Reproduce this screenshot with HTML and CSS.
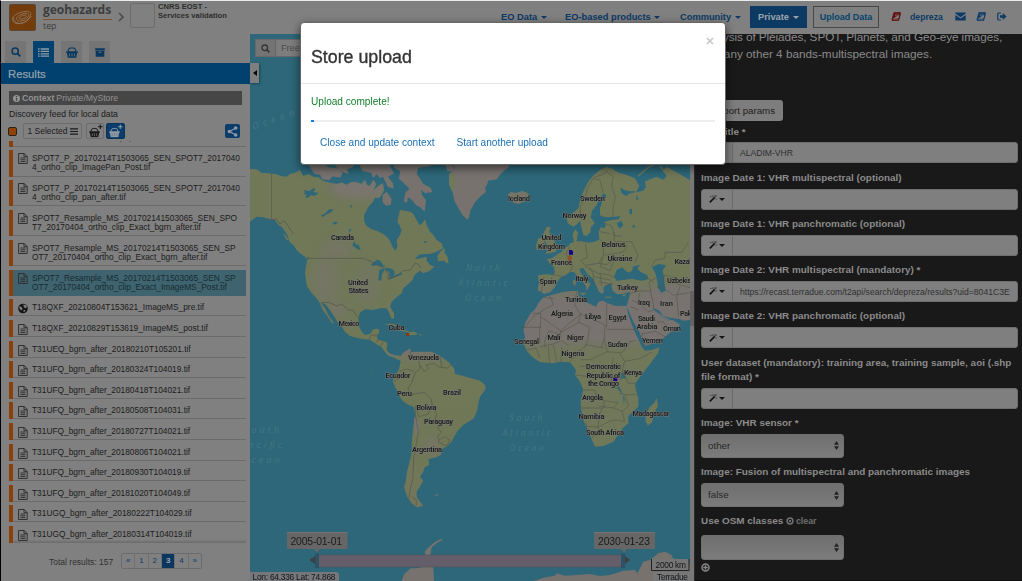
FILE: index.html
```html
<!DOCTYPE html>
<html lang="en">
<head>
<meta charset="utf-8">
<title>Geohazards TEP</title>
<link rel="stylesheet" href="styles.css">
</head>
<body>
<svg width="0" height="0" class="defs">
  <symbol id="file" viewBox="0 0 10 11"><path d="M.6.5h5.6l3 3v7H.6zM6 .5v3.2h3.2M2.4 5h5M2.4 6.8h5M2.4 8.6h5" fill="none" stroke="currentColor"/></symbol>
  <symbol id="globe" viewBox="0 0 10 10"><circle cx="5" cy="5" r="4.8" fill="#151515"/><path d="M5.3 1l3 .8.6 2-1.8 1-1.4-1.5zM1 3l2.2.2 1.3 2-1 1.6L2 6zM5.8 6.3l1.6.5-1 1.8-1.1-.6z" fill="#808080"/></symbol>
  <symbol id="basket" viewBox="0 0 12 11"><path d="M2 4.5Q2.600 1 4.500 1h3Q9.400 1 10 4.500" fill="none" stroke="currentColor" stroke-width="1.100"/><path d="M.2 4.200h11.600v1.500h-.7L10.200 10.700H1.800L.9 5.700H.2z" fill="currentColor"/><path d="M3.600 6.400v3M6 6.400v3M8.400 6.400v3" stroke="#7b7b7b" stroke-width=".8"/></symbol>
  <symbol id="search" viewBox="0 0 10 10"><circle cx="4.2" cy="4.2" r="3.1" fill="none" stroke="currentColor" stroke-width="1.500"/><path d="M6.400 6.400l2.900 2.900" stroke="currentColor" stroke-width="1.900"/></symbol>
  <symbol id="book" viewBox="0 0 10 9"><path d="M3 .4h6.500L7.700 7H1.100zM1.100 7q-.6 1.600.6 1.600h5.900L9.500 2" fill="currentColor" stroke="currentColor" stroke-width=".7" stroke-linejoin="round"/><path d="M4 2.200h3.800M3.600 3.600h3.800M1.900 7.500h5.300" stroke="#808080" stroke-width=".5"/></symbol>
  <symbol id="wand" viewBox="0 0 10 10"><path d="M1 9.200l6.200-6.200" stroke="#121212" stroke-width="2"/><path d="M1.200 1.800h2M4.400.6v1.700M5.400 1.300h4M8.500.5v2.300M9 4.400v1.800" stroke="#2a2a2a" stroke-width=".8"/></symbol>
</svg>
<div class="app">
  <header class="topbar">
    <div class="logo"><svg viewBox="0 0 27 27"><g fill="none" stroke="#8b7760" stroke-width="1"><path d="M4 15c-2-3 6-8 13-8 7-1 7 5 1 10-6 5-13 3-14-2z"/><path d="M7 15c0-3 6-6 10-6 5 0 4 4-1 7-4 2-8 2-9-1z"/><path d="M10 14c1-2 4-3 6-3 3 0 1 3-2 4-2 1-4 0-4-1zM3 13c-1 4 1 8 8 7 6-1 9-4 12-8"/></g></svg></div>
    <div class="brand"><div class="brand-name">geohazards</div><div class="brand-sub">tep</div></div>
    <svg class="crumb" viewBox="0 0 6 10"><path d="M1 1l4 4-4 4" fill="none" stroke="#4d4d4d" stroke-width="1.700"/></svg>
    <div class="thumb"></div>
    <div class="community">CNRS EOST -<br>Services validation</div>
    <nav class="nav">
      <a class="n1">EO Data <i class="caret"></i></a>
      <a class="n2">EO-based products <i class="caret"></i></a>
      <a class="n3">Community <i class="caret"></i></a>
      <a class="private">Private <i class="caret"></i></a>
      <a class="upload">Upload Data</a>
      <svg class="ico red"><use href="#book"/></svg>
      <a class="user">depreza</a>
      <svg class="ico env" viewBox="0 0 11 9"><path d="M.3.5h10.400v1L5.500 5.300.3 1.500zM.3 3l5.200 3.600L10.700 3v5.500H.3z" fill="currentColor"/></svg>
      <svg class="ico bk"><use href="#book"/></svg>
      <svg class="ico out" viewBox="0 0 10 9"><path d="M4 1H1.800Q.8 1 .8 2v5q0 1 1 1H4" fill="none" stroke="currentColor" stroke-width="1.200"/><path d="M3 3.300h2.800V1l3.800 3.500L5.800 8V5.800H3z" fill="currentColor"/></svg>
    </nav>
  </header>
  <main class="body">
    <aside class="side">
      <div class="tabs">
        <span class="tab"><svg width="10" height="10"><use href="#search"/></svg></span>
        <span class="tab on"><svg width="11" height="9" viewBox="0 0 11 9"><path d="M0 1h1.600M2.600 1H11M0 3.400h1.600M2.600 3.400H11M0 5.800h1.600M2.600 5.800H11M0 8.200h1.600M2.600 8.200H11" stroke="#909ba2" stroke-width="1.300"/></svg></span>
        <span class="tab"><svg width="12" height="11"><use href="#basket"/></svg></span>
        <span class="tab"><svg width="10" height="9" viewBox="0 0 10 9"><path d="M.2.3h9.600v2.200H.2zM.7 3h8.600v5.800H.7z" fill="currentColor"/><path d="M3.700 4.200h2.600" stroke="#777"/></svg></span>
      </div>
      <div class="results-title">Results</div>
      <div class="context"><svg width="7" height="7" viewBox="0 0 8 8"><circle cx="4" cy="4" r="4" fill="#939393"/><path d="M4 1.200v1.400M4 3.400v3.300" stroke="#444" stroke-width="1.400"/></svg><b>Context</b> Private/MyStore</div>
      <div class="feed">Discovery feed for local data</div>
      <div class="tools">
        <i class="swatch"></i>
        <span class="btn sel">1 Selected <svg width="8" height="7" viewBox="0 0 8 7"><path d="M0 .9h8M0 3.500h8M0 6.100h8" stroke="#181818" stroke-width="1.100"/></svg></span>
        <span class="btn bask"><svg width="15" height="14" viewBox="0 0 15 14"><use href="#basket" x="1" y="3.500" width="11" height="10"/><path d="M10 2.700h4.600M12.300.4V5" stroke="#151515" stroke-width="1.100"/></svg></span>
        <span class="btn bask blue"><svg width="15" height="14" viewBox="0 0 15 14"><use href="#basket" x="1" y="3.500" width="11" height="10"/><path d="M10 2.700h4.600M12.300.4V5" stroke="#8d99a5" stroke-width="1.100"/></svg></span>
        <span class="share"><svg width="11" height="11" viewBox="0 0 11 11"><path d="M8.800 2L2.500 5.400 8.800 9" fill="none" stroke="#8d99a5" stroke-width="1.200"/><g fill="#8d99a5"><circle cx="8.700" cy="2" r="1.800"/><circle cx="2.400" cy="5.500" r="1.800"/><circle cx="8.700" cy="9" r="1.800"/></g></svg></span>
      </div>
      <div class="list">
        <div class="row cut"><span>T7_20170404_ortho_clip_pan.tif</span></div>
        <div class="row two"><svg><use href="#file"/></svg><span>SPOT7_P_20170214T1503065_SEN_SPOT7_2017040<br>4_ortho_clip_ImagePan_Post.tif</span></div>
        <div class="row two"><svg><use href="#file"/></svg><span>SPOT7_P_20170214T1503065_SEN_SPOT7_2017040<br>4_ortho_clip_pan_after.tif</span></div>
        <div class="row two"><svg><use href="#file"/></svg><span>SPOT7_Resample_MS_201702141503065_SEN_SPO<br>T7_20170404_ortho_clip_Exact_bgrn_after.tif</span></div>
        <div class="row two"><svg><use href="#file"/></svg><span>SPOT7_Resample_MS_20170214T1503065_SEN_SP<br>OT7_20170404_ortho_clip_Exact_bgrn_after.tif</span></div>
        <div class="row two active"><svg><use href="#file"/></svg><span>SPOT7_Resample_MS_20170214T1503065_SEN_SP<br>OT7_20170404_ortho_clip_Exact_ImageMS_Post.tif</span></div>
        <div class="row"><svg><use href="#globe"/></svg><span>T18QXF_20210804T153621_ImageMS_pre.tif</span></div>
        <div class="row"><svg><use href="#file"/></svg><span>T18QXF_20210829T153619_ImageMS_post.tif</span></div>
        <div class="row"><svg><use href="#file"/></svg><span>T31UEQ_bgrn_after_20180210T105201.tif</span></div>
        <div class="row"><svg><use href="#file"/></svg><span>T31UFQ_bgrn_after_20180324T104019.tif</span></div>
        <div class="row"><svg><use href="#file"/></svg><span>T31UFQ_bgrn_after_20180418T104021.tif</span></div>
        <div class="row"><svg><use href="#file"/></svg><span>T31UFQ_bgrn_after_20180508T104031.tif</span></div>
        <div class="row"><svg><use href="#file"/></svg><span>T31UFQ_bgrn_after_20180727T104021.tif</span></div>
        <div class="row"><svg><use href="#file"/></svg><span>T31UFQ_bgrn_after_20180806T104021.tif</span></div>
        <div class="row"><svg><use href="#file"/></svg><span>T31UFQ_bgrn_after_20180930T104019.tif</span></div>
        <div class="row"><svg><use href="#file"/></svg><span>T31UFQ_bgrn_after_20181020T104049.tif</span></div>
        <div class="row"><svg><use href="#file"/></svg><span>T31UGQ_bgrn_after_20180222T104029.tif</span></div>
        <div class="row last"><svg><use href="#file"/></svg><span>T31UGQ_bgrn_after_20180314T104019.tif</span></div>
      </div>
      <div class="pager"><span class="total">Total results: 157</span><span class="pages"><a>«</a><a>1</a><a>2</a><a class="cur">3</a><a>4</a><a>»</a></span></div>
    </aside>
    <section class="map">
      <svg class="world" viewBox="250 34 440 547">
        <defs>
          <linearGradient id="hot" x1="0" y1="0" x2="0" y2="1"><stop offset="0" stop-color="#78726f"/><stop offset=".1" stop-color="#707858"/><stop offset=".7" stop-color="#707757"/><stop offset="1" stop-color="#74765b"/></linearGradient>
          <linearGradient id="afr" gradientUnits="userSpaceOnUse" x1="0" y1="20" x2="0" y2="860"><stop offset="0" stop-color="#707858"/><stop offset=".4" stop-color="#707858"/><stop offset=".48" stop-color="#787370"/><stop offset=".61" stop-color="#787370"/><stop offset=".66" stop-color="#707859"/><stop offset="1" stop-color="#707859"/></linearGradient>
          <filter id="soft"><feGaussianBlur stdDeviation="14"/></filter>
        </defs>
        <rect x="250" y="34" width="440" height="547" fill="#2d6779"/>
        <g transform="translate(250 160) scale(.33333)" stroke-linejoin="round">
          <clipPath id="na"><path id="nap" d="M0 27L20 28 35 38 55 40 75 42 95 48 110 50 120 42 135 38 150 30 160 48 175 42 190 50 205 52 220 62 240 68 260 72 275 68 290 75 300 68 315 66 335 72 345 60 350 75 360 78 370 60 378 72 370 92 385 78 398 70 402 90 395 105 385 115 375 112 372 125 360 135 350 150 342 165 343 185 350 198 365 208 380 212 400 222 412 232 420 242 428 262 437 272 442 260 440 240 450 225 455 210 448 195 442 185 445 170 450 150 465 152 480 155 490 162 500 180 508 195 515 192 525 178 530 195 540 215 550 225 560 240 575 250 580 265 560 275 540 282 520 282 505 285 495 298 510 295 530 290 530 302 540 315 553 320 540 332 520 340 510 332 500 340 492 348 488 360 475 372 460 385 455 400 440 412 425 425 420 440 432 460 432 475 425 477 417 458 410 445 390 445 370 450 345 448 330 458 325 475 328 500 335 515 345 525 360 522 370 508 385 506 388 515 380 530 385 540 400 543 412 548 410 570 420 582 435 590 445 585 452 592 445 600 430 592 415 588 402 572 395 562 375 550 360 540 345 538 325 535 300 528 285 515 275 500 262 485 250 465 240 450 225 432 213 428 225 445 235 465 252 490 245 488 230 465 218 450 210 430 200 415 185 400 172 380 168 365 165 340 168 318 172 300 165 290 150 280 140 270 130 255 118 245 112 225 95 200 85 195 75 180 60 178 40 172 20 170 0 185Z"/></clipPath>
          <use href="#nap" fill="#707858"/>
          <g clip-path="url(#na)"><g filter="url(#soft)" fill="#7a7470"><ellipse cx="330" cy="80" rx="90" ry="35"/><ellipse cx="260" cy="265" rx="45" ry="22" opacity=".6"/><ellipse cx="225" cy="360" rx="38" ry="70" opacity=".5"/><ellipse cx="350" cy="375" rx="40" ry="60" opacity=".3"/><ellipse cx="260" cy="450" rx="30" ry="20" opacity=".7"/></g></g>
          <g fill="#78726f"><path d="M175 15l15-8 25 0 20 15 25 3 18 14-8 14-22-4-10 12-22-4-5-12-18-4zM243 0h60l8 20-20 8 5 14-28-10zM320 0h90l22 40-18 10 15 20 2 16-18-6-14-30-10 4-8-12-12 12-6-16-25-4zM440 0h70l25 0 8 18-38 5-5 18 20 30 22 12 5 14-22 2-12-10 3 16 12 16-4 34-14-14-12-5-12-16-12-8-3 16-10-4 5-26 12-12-20-20-12-10 5-22-20-12zM398 105l12-10 15 22-3 18-14 2-10-10zM585 8l30 12-5 14-18 0zM690 0H610l2 30-15 12 0 30 10 22 6 28 14 26 10 16 15 16 5-8 5-22 12-22 16-18 18-14z"/></g>
          <path d="M600 42l12-5 6 30-6 20-8 5-6-20z" fill="#707858"/>
          <g fill="#707858"><path d="M562 288l10-14 12-10 0 16 8 8 4 22-8-2-6-6-18 2zM440 510l8-3 14 4 16 2-4 4-20-4zM475 517l18-2 12 6-12 4-16 0zM400 492l30-1 15 8-20-3zM507 523h8v3h-8zM100 222l6 2 10 16-6 0z"/></g>
          <g fill="#2d6779"><path d="M160 90l18 4 12-10 6 4-6 8 16 3-12 8-12-1-10 8-6-2 4-8-10-3 6-4zM213 165l12-4 10-12 15-2-6 10-14 6-12 8zM247 188l10-3 8 3-14 6zM300 135l6 2-3 9zM296 212l6-8 1 8-5 4zM308 252l6-8 4 10 8 0 6 16-10-2-8-8-6-2zM522 244l8 0 0 5-7-1zM363 313l18-14 10 4 10 14 8 1-12 4-16-6-14 2zM385 360l3-30 12-6 2 8-6 10-2 20zM402 325l14-2 16 8 2 12-12 10-4-6 0-12-8-2zM415 354l20-8 20-8 2 5-22 9-18 6zM170 290l8 5-6 4zM362 135l14-20 8 2-6 20z"/></g>
          <g fill="none" stroke="#55544f" stroke-width="2"><path d="M64 40V178L80 178 90 192 103 182 112 195 130 222M172 295H342L362 304 395 322 415 340 415 358 435 350 460 332 480 331 495 310 505 312 512 324M213 428L235 427 262 438 275 432 295 450 308 450 326 475M357 540L362 526 382 525M378 548L388 535M400 545L390 560"/></g>
          <path d="M450 590L460 578 480 565 484 576 500 575 545 575 570 588 595 605 612 625 615 642 640 648 690 662 705 675 707 687 698 700 690 710 685 730 682 750 672 775 640 795 625 810 615 825 605 845 590 860 578 865 572 885 558 892 535 898 538 915 524 922 520 935 510 950 520 962 510 980 500 995 500 1010 508 1022 520 1038 500 1042 485 1030 472 1012 462 982 468 960 470 940 476 915 484 885 486 840 490 800 496 765 492 742 470 732 455 720 445 700 435 680 428 664 432 650 446 630 452 605 445 595 437 590 420 588 412 578Z" fill="url(#hot)"/>
          <g fill="#7a7471"><path d="M492 775l8 0 10 15-8 35-6 5z"/><ellipse cx="545" cy="860" rx="24" ry="28" opacity=".6" filter="url(#soft)"/></g>
          <g fill="none" stroke="#55564b" stroke-width="2"><path d="M480 575l4 16 22 8 4 28-14 10-10 30-12 20 12 16 14-2 22-4 20 18 6 22 12 24-4 16 12 8-4 22 12 10-12 10 0 10M492 635l-8-4-16-4-20 8M432 664l20-12 12-14M510 615l12 20 14-10-8-10 24-5 16 12 24 2 14-12M570 590l5 30M555 740l-14 4-6 18-28 8-6-20-4-14M500 735l-5 20 10 60-10 60-4 20-2 60-8 30-4 32M565 840l20-10 15 12-10 16-22-10zM540 772l-6 14M485 1010l14 10v16"/></g>
          <path d="M455 1263L462 1243 482 1225 500 1225 515 1222 528 1188 524 1175 540 1158 552 1148 570 1138 580 1138 560 1150 545 1162 540 1190 550 1225 552 1263ZM850 1263L880 1253 915 1247 920 1240 945 1247 970 1246 1020 1242 1050 1248 1080 1245 1120 1232 1155 1230 1162 1240 1180 1205 1200 1200 1225 1180 1245 1175 1265 1185 1268 1195 1320 1210V1263ZM553 1005l14-3-8 6zM364 638h4v2h-4z" fill="#78726f"/>
        </g>
        <g transform="translate(470 160) scale(.33333)">
          <path d="M0 0H110L118 20 95 38 80 58 55 62 50 78 25 92 12 110 0 122Z" fill="#78726f"/>
          <path d="M113 105l10-10 14 4 20-6 15 5 6 16-14 10-18 8-16-4-4-10z" fill="#757466"/>
          <path d="M293 190L290 175 308 160 325 145 332 115 342 90 355 65 372 45 390 30 410 20 430 28 445 38 470 45 495 55 508 78 500 94 478 94 462 90 450 82 455 100 468 108 480 100 520 92 528 80 524 65 540 58 560 50 580 60 590 48 578 32 590 20 660 60V480L640 482 630 478 600 473 580 467 568 452 552 444 545 440 558 458 575 475 592 482 608 480 632 494 620 502 600 515 580 535 550 550 526 558 520 545 508 515 490 485 475 450 470 440 474 460 484 490 494 515 504 535 515 560 525 572 545 570 568 562 565 578 540 612 510 650 495 672 498 690 505 715 505 740 475 768 475 790 458 805 448 820 430 845 400 858 375 860 368 845 352 808 342 785 333 745 332 720 340 690 330 665 315 645 318 630 300 607 270 605 250 610 210 606 188 592 172 575 160 550 165 530 160 510 165 490 182 460 195 448 205 430 220 412 245 405 270 398 300 393 324 393 325 405 340 422 355 430 378 440 385 425 400 422 412 430 435 437 470 438 478 410 480 395 460 402 440 402 428 392 424 378 428 368 412 375 400 382 402 395 395 402 386 393 378 375 370 358 352 342 340 324 328 326 334 342 346 356 362 372 356 382 350 392 348 378 338 364 325 350 312 336 300 336 282 348 272 352 260 368 255 382 240 397 222 402 212 395 203 390 207 368 204 346 225 343 250 345 255 335 250 318 238 308 230 298 245 295 260 284 275 275 282 264 296 258 300 250 312 246 308 222 316 208 324 218 320 244 335 244 352 248 375 245 388 238 386 215 392 202 402 205 408 196 402 186 425 180 445 178 452 168 435 170 405 172 390 166 390 145 396 125 410 108 402 100 390 112 380 135 366 152 362 172 374 190 362 202 362 215 350 228 340 225 334 202 330 182 322 192 310 200Z" fill="url(#afr)"/>
          <path d="M230 200l12 2-4 14 8 16 10 16 8 12-8 16-30 6 6-10-8-6 6-14-6-8-6-18zM205 235l15-2 4 18-6 16-18 4-2-14zM310 374l-2-14 10 2-2 16zM325 398l24 0-8 8zM404 410h20v3h-20zM455 407l14-6-6 9zM560 715l4 22-10 20-8 30-12 10-8-15 3-22 10-18 14-14z" fill="#707858"/>
          <path d="M560 455l-15-5-60-15-6 20 12 30 18 32 18 38 20-8 40-18 40-32-20-14zM520 400l60-25 80 0v105l-60-10-30-20-40-10z" fill="#787370" opacity=".8"/>
          <g fill="#2d6779"><path d="M432 350l8-20 16-8 12 12 10 4 10-8 0-10 22-6-8 12 10 10 20 10 2 12-20 4-30-6-24 4-20 2zM546 322l20-10 22 4-10 16 4 20 2 22 4 18-14 6-10-14-2-20-6-24zM440 190l14-8 6 14-12 10zM478 148l8-2 0 18-8-4zM488 195h6v8h-6zM498 105l8 12-6 4zM452 640l14 0 2 14-14 2zM440 678l8 2 16 36-2 18-4-30-14-16z"/></g>
          <path d="M505 48l30-26 20-10 25-10M495 95l4-2M580 30l-10-12" stroke="#707858" stroke-width="4" fill="none"/>
          <g fill="none" stroke="#55564c" stroke-width="1.800"><path d="M334 180L330 140 345 115 352 85 370 55 390 60 400 100M372 52L395 45 410 35 430 50 425 80 436 110 430 140 428 170M405 190l20 8 10 30 20 0M390 215l30 6M346 250l6 42-20 10 14 14 40-6 24 4 18-16 30 0M388 238l12 10 0 38-14 24M400 286l60-10 12-20M430 215l4 30 50 0 20 40-10 24M300 260l-12 22 12 16 8 20-8 20M282 350l-34-6M222 350l-8 46M345 320l40 20 30 4 16 8M360 322l10 20 0 30M372 350l50 10M385 365l40 8M390 340l5 38M400 290l-10 30 30 12 10-26-14-16M425 370l-20 8M520 350l20 8 12 10M480 400l30-8 32 2-4-30 20-10M510 395l-6 30 30 30 16-4M485 420l30 15M482 440l24 10M542 394l10 52M590 390l20 16 48-8M560 380l22 6M575 395l8-50 30 8 10 20 40 10M545 320l10-20 30-5 0-18 50 0 20-30M630 380l-10 30 6 60M550 550l-30 2-4-30 40-8 34 18M595 505l-16-20-18 0M240 408l10 26-30 16-30 20-28 34M220 412l30 4M186 460h26v42h-54M212 470l60 42 60-50 76 34M320 395l-6 40 18 28-6 24-60 34-30-8-12 30 0 20M272 512l0 22-32 6M326 487l32 14-4 36-10 28M410 430v70l-6 0v32l-10 30M410 508h96M165 550l44-2 0-50M172 570l26-6 12 30M210 560l40-8 10 52M250 552l24-10 22 14M235 560l4 48M275 560l-2 44M300 604l20-20 28-30M348 554l54 10M330 620l56-6 10 22M402 535l10 40-50 24-30 0M412 575l44 4 24-34 16-4M450 580l14 24 44-8 40-20M464 604l-8 30 20 36 20 0M430 595l-6 35 0 40M340 690h34l10 30 18 2v22l-70 0M402 722l42 6-14 16-42-6M395 745l-10 40 0 28-20 22M430 744l26 10 8 30-26-4-20 4-30 16M456 754l20-16-12-34-18-4M425 680l24 8M464 704l36 0M350 790l0 10 36 0M460 630l-10 30M318 645l32 4 12-32"/></g>
          <path d="M292 290l8-4 6 6-2 10h-10z" fill="#8b5222"/><path d="M297 270h8l4 4v10h-12zM432 651h10v12h-12v-8z" fill="#170089"/>
        </g>
        <rect x="406" y="333" width="3" height="3" fill="#8b3508"/>
        <g class="places">
          <text x="331" y="239.500" textLength="23">Canada</text><text x="348" y="284.500" textLength="20">United</text><text x="348.500" y="293" textLength="20">States</text><text x="338.500" y="325.500" textLength="21">Mexico</text><text x="388.500" y="330" textLength="16">Cuba</text><text x="408" y="360" textLength="31">Venezuela</text><text x="385.500" y="377.500" textLength="25">Ecuador</text><text x="397" y="396" textLength="15">Peru</text><text x="443" y="395" textLength="18">Brazil</text><text x="416.500" y="410" textLength="20">Bolivia</text><text x="424" y="424" textLength="29">Paraguay</text><text x="412" y="452" textLength="30">Argentina</text>
          <text x="508" y="201" textLength="22">Iceland</text><text x="580" y="201" textLength="25">Sweden</text><text x="562.500" y="218" textLength="24">Norway</text><text x="541.500" y="240" textLength="20">United</text><text x="538" y="248.500" textLength="27">Kingdom</text><text x="601.500" y="246.500" textLength="24">Belarus</text><text x="607.500" y="260.500" textLength="25">Ukraine</text><text x="551" y="265" textLength="21">France</text><text x="539.500" y="283.500" textLength="17">Spain</text><text x="575.500" y="280.500" textLength="13">Italy</text><text x="617" y="289.500" textLength="21">Turkey</text><text x="674.500" y="264" textLength="35">Kazakhstan</text><text x="667" y="282.500" textLength="34">Uzbekistan</text><text x="565" y="302" textLength="22">Tunisia</text><text x="551" y="316" textLength="22">Algeria</text><text x="585" y="318.500" textLength="16">Libya</text><text x="608.500" y="319.500" textLength="18">Egypt</text><text x="638" y="304.500" textLength="12">Iraq</text><text x="660" y="305.500" textLength="13">Iran</text><text x="680" y="316" textLength="26">Pakistan</text><text x="638" y="320.500" textLength="17">Saudi</text><text x="636.500" y="329" textLength="21">Arabia</text><text x="663" y="331" textLength="18">Oman</text><text x="642" y="342.500" textLength="21">Yemen</text><text x="514" y="344" textLength="25">Senegal</text><text x="547.500" y="339.500" textLength="13">Mali</text><text x="567" y="339.500" textLength="17">Niger</text><text x="607.500" y="347" textLength="20">Sudan</text><text x="561.500" y="356" textLength="23">Nigeria</text><text x="586" y="369" textLength="35">Democratic</text><text x="586.500" y="377.500" textLength="34">Republic of</text><text x="588" y="386" textLength="31">the Congo</text><text x="624" y="374.500" textLength="18">Kenya</text><text x="582" y="400" textLength="21">Angola</text><text x="578.500" y="419" textLength="26">Namibia</text><text x="586" y="435" textLength="38">South Africa</text><text x="632.500" y="415.500" textLength="37">Madagascar</text>
        </g>
        <g class="seas"><text x="466" y="270.500" textLength="34">North</text><text x="458.500" y="285.500" textLength="49">Atlantic</text><text x="465" y="300.500" textLength="36">Ocean</text><text x="509.500" y="421" textLength="33">South</text><text x="502.500" y="436" textLength="48">Atlantic</text><text x="509" y="451" textLength="35">Ocean</text><text x="244" y="433" textLength="35">South</text><text x="240" y="448" textLength="42">Pacific</text><text x="242" y="463" textLength="38">Ocean</text><text x="223" y="131" textLength="74" transform="rotate(-19 249 130)">tic Ocean</text></g>
        <g class="slider"><rect x="317" y="555" width="307" height="12" fill="#635e69" stroke="#51525d" stroke-width=".6"/><path d="M315 553.500h4V568h-4zM621 553.500h4V568h-4z" fill="#2c5263"/><path d="M315 556v8l-5.500-4zM625 556v8l5-4z" fill="#3e4142"/><path d="M287 532h60.500v17H320l-3 3.500-3-3.500h-27zM594 532h61v17h-28l-3 3.500-3-3.500h-27z" fill="#666"/><path d="M287 532.500h60.500M594 532.500h61" stroke="#737373"/><text x="290.500" y="544.500" textLength="51.500">2005-01-01</text><text x="598" y="544.500" textLength="52">2030-01-23</text></g>
        <g class="notes"><path d="M250 572h86q3 0 3 3v6h-89z" fill="#75777a"/><path d="M653 572h37v9h-37z" fill="#77787a"/><path d="M651.500 559v11.500h37.500V559" fill="#757575" stroke="#222"/><text x="252.500" y="580.300" textLength="83">Lon: 64.336 Lat: 74.868</text><text x="655.500" y="568" textLength="30.500">2000 km</text><text x="657" y="580.300" textLength="31">Terradue</text></g>
      </svg>
      <div class="map-search"><span><svg width="9" height="9"><use href="#search"/></svg></span>Free</div>
      <div class="toggle"></div>
    </section>
    <div class="gutter"><i></i></div>
    <section class="panel">
      <p class="desc"><span>analysis of Pléiades, SPOT, Planets, and Geo-eye images,</span><br>and any other 4 bands-multispectral images.</p>
      <span class="import">Import params</span>
      <label>Job title *</label>
      <div class="field"><span></span><div>ALADIM-VHR</div></div>
      <label>Image Date 1: VHR multispectral (optional)</label>
      <div class="field"><span><svg><use href="#wand"/></svg><i class="caret"></i></span><div></div></div>
      <label>Image Date 1: VHR panchromatic (optional)</label>
      <div class="field"><span><svg><use href="#wand"/></svg><i class="caret"></i></span><div></div></div>
      <label>Image Date 2: VHR multispectral (mandatory) *</label>
      <div class="field"><span><svg><use href="#wand"/></svg><i class="caret"></i></span><div><em>https://recast.terradue.com/t2api/search/depreza/results?uid=8041C3E</em></div></div>
      <label>Image Date 2: VHR panchromatic (optional)</label>
      <div class="field"><span><svg><use href="#wand"/></svg><i class="caret"></i></span><div></div></div>
      <label class="tall">User dataset (mandatory): training area, training sample, aoi (.shp<br>file format) *</label>
      <div class="field"><span><svg><use href="#wand"/></svg><i class="caret"></i></span><div></div></div>
      <label>Image: VHR sensor *</label>
      <div class="select">other<svg viewBox="0 0 5 9"><path d="M0 3.700L2.500 0 5 3.700zM0 5.300h5L2.500 9z"/></svg></div>
      <label class="s">Image: Fusion of multispectral and panchromatic images</label>
      <div class="select">false<svg viewBox="0 0 5 9"><path d="M0 3.700L2.500 0 5 3.700zM0 5.300h5L2.500 9z"/></svg></div>
      <label class="s osm">Use OSM classes <svg width="8" height="8" viewBox="0 0 8 8"><circle cx="4" cy="4" r="2.900" fill="none" stroke="#707070" stroke-width="1.500"/><path d="M2.800 2.800l2.400 2.400M5.200 2.800L2.800 5.200" stroke="#707070"/></svg><small>clear</small></label>
      <div class="select"><svg viewBox="0 0 5 9"><path d="M0 3.700L2.500 0 5 3.700zM0 5.300h5L2.500 9z"/></svg></div>
      <svg class="add" width="9" height="9" viewBox="0 0 9 9"><circle cx="4.500" cy="4.500" r="3.500" fill="none" stroke="#888" stroke-width="1.500"/><path d="M2.300 4.500h4.400M4.500 2.300v4.400" stroke="#888" stroke-width="1.300"/></svg>
    </section>
  </main>
</div>
<div class="modal">
  <div class="modal-head"><h1>Store upload</h1><svg class="close" width="8" height="8" viewBox="0 0 8 8"><path d="M1 1l6 6M7 1L1 7" stroke="#c8c8c8" stroke-width="1.700"/></svg></div>
  <div class="modal-body">
    <div class="ok">Upload complete!</div>
    <div class="progress"><i></i></div>
    <div class="actions"><a>Close and update context</a><a>Start another upload</a></div>
  </div>
</div>
</body>
</html>
```

FILE: styles.css
```css
* { box-sizing: border-box; }
body { margin: 0; width: 1022px; height: 581px; overflow: hidden; background: #000; font: 10.1px/14px "Liberation Sans", Arial, sans-serif; color: #1a1a1a; position: relative; }
.defs { position: absolute; }
.app { width: 1022px; height: 581px; display: flex; flex-direction: column; border-top: 1px solid #e9ecec; border-left: 1px solid #000; background: #808080; }
.topbar { height: 33px; flex: none; display: flex; background: #808080; }
.logo { width: 27px; height: 27px; margin: 3px 0 0 8px; background: #743c0b; border: 1px solid #5a4635; border-radius: 2px; }
.logo svg { display: block; width: 25px; height: 25px; }
.brand { width: 69px; margin-left: 7px; font-family: "Open Sans", sans-serif; color: #3d3d3d; }
.brand-name { font-size: 12.1px; font-weight: 700; letter-spacing: -.1px; line-height: 18px; height: 18.5px; border-bottom: 1px solid #81522c; }
.brand-sub { font-size: 8.8px; line-height: 10px; padding-top: 1px; }
.crumb { width: 6px; height: 10px; margin: 11px 0 0 6px; }
.thumb { width: 25px; height: 25px; margin: 2px 0 0 6px; border: 1px solid #6c6c6c; border-radius: 2px; }
.community { margin: 2px 0 0 3px; width: 100px; font-weight: bold; font-size: 7.6px; line-height: 8.6px; color: #2d2d2d; white-space: nowrap; }
.nav { margin-left: auto; display: flex; align-items: center; width: 521px; height: 31px; font-weight: bold; font-size: 9.3px; color: #0c3a66; }
.nav a { flex: none; white-space: nowrap; }
.caret { display: inline-block; border: 3px solid transparent; border-top-color: currentColor; border-bottom: 0; vertical-align: 1px; margin-left: 1px; }
.n1 { width: 64px; }
.n2 { width: 115px; }
.n3 { width: 70px; }
.nav .private { width: 57px; height: 22px; line-height: 22px; padding-left: 8px; background: #0c3a62; color: #9ba4ac; }
.nav .upload { width: 66px; height: 22px; line-height: 20px; margin: 0 12px 0 6px; text-align: center; border: 1px solid #474747; color: #04446f; font-size: 9px; }
.ico { flex: none; width: 10px; height: 9px; }
.red { color: #620a0c; }
.user { width: 45px; margin-left: 9px; font-size: 8.7px; }
.env { width: 11px; }
.bk { margin-left: 10px; }
.out { margin-left: 11px; }
.body { flex: 1; display: flex; min-height: 0; }
.side { width: 249px; flex: none; background: #808080; display: flex; flex-direction: column; }
.tabs { display: flex; gap: 7px; padding: 7px 0 0 4px; }
.tab { width: 21px; height: 22px; background: #757575; display: flex; align-items: center; justify-content: center; color: #08375f; }
.tab.on { background: #004170; }
.results-title { height: 21px; background: #004170; color: #98a2a9; font-size: 11.3px; line-height: 23px; padding-left: 7px; -webkit-text-stroke: .2px; }
.context { margin: 7px 8px 0; height: 14px; background: #464646; color: #939393; font-size: 8.7px; line-height: 14px; padding-left: 4px; display: flex; align-items: center; gap: 2px; }
.feed { margin: 3px 0 0 8px; font-size: 8.65px; line-height: 12px; }
.tools { display: flex; height: 16px; margin-top: 3px; padding-left: 7px; align-items: center; flex: none; }
.swatch { width: 9px; height: 9px; background: #8b4308; border: 1px solid #302015; border-radius: 2px; }
.btn { height: 16px; border: 1px solid #6c6c6c; border-radius: 2px; display: flex; align-items: center; justify-content: center; flex: none; }
.sel { width: 59px; margin-left: 6px; font-size: 8.5px; gap: 2px; white-space: nowrap; }
.bask { width: 18px; margin-left: 4px; }
.blue { background: #0c3c69; border-color: #0a335a; color: #8d99a5; width: 19px; margin-left: 2px; }
.share { width: 15px; height: 14px; margin-left: 100px; border-radius: 2px; background: #0c3c69; display: flex; align-items: center; justify-content: center; }
.list { flex: none; height: 402px; margin: 2px 4px 0 8px; overflow: hidden; font-size: 8.35px; line-height: 9.3px; color: #1c1c1c; }
.row { height: 17px; margin-bottom: 3.6px; border-left: 4px solid #8a4009; display: flex; white-space: nowrap; padding-left: 5px; background: linear-gradient(#6b6b6b, #6b6b6b) right bottom / 100% 1px no-repeat; }
.row svg { width: 10px; height: 11px; margin: 4px 4px 0 0; color: #303030; flex: none; }
.row span { padding-top: 4px; }
.two { height: 26.5px; margin-bottom: 3.4px; }
.two svg { margin-top: 3px; }
.cut { height: 6px; margin-bottom: 3px; padding-left: 19px; }
.cut span { margin-top: -11px; height: 12px; overflow: hidden; color: #444; }
.row.active { background: #3f646f; color: #172b33; }
.row.last { background: linear-gradient(#0000, #0000 80%, #6b6b6b); margin: 0; }
.pager { display: flex; align-items: center; margin-top: 9.5px; height: 16px; font-size: 8.5px; color: #303030; }
.total { width: 72px; margin-left: 48px; padding-top: 2px; white-space: nowrap; }
.pages { display: flex; border: 1px solid #6b6b6b; border-radius: 2px; width: 81px; height: 16px; color: #0c3b67; font-size: 8px; }
.pages a { flex: 1; text-align: center; line-height: 14px; border-left: 1px solid #707070; }
.pages a:first-child { border-left: 0; }
.pages .cur { background: #0a365f; color: #9ca5ae; font-weight: bold; }
.map { width: 440px; flex: none; position: relative; }
.world { display: block; width: 440px; height: 547px; overflow: hidden; }
.places { font: 600 7.5px Roboto, sans-serif; fill: #1c1c1c; stroke: #7b7b78; stroke-width: .8px; paint-order: stroke; }
.places text, .seas text, .slider text, .notes text { white-space: pre; }
.seas { font: italic 8.8px "Open Sans", sans-serif; fill: #477588; }
.slider text { font: 10.4px "Liberation Sans", sans-serif; fill: #1b1b1b; }
.notes text { font: 8.4px "Liberation Sans", sans-serif; fill: #151515; }
.map-search { position: absolute; left: 5px; top: 5px; width: 150px; height: 18px; background: #7d7d7d; border: 1px solid #696969; font-size: 9.1px; line-height: 17px; color: #4c4c4c; display: flex; gap: 5px; }
.map-search span { width: 20px; background: #747474; border-right: 1px solid #666; color: #353535; display: flex; align-items: center; justify-content: center; }
.toggle { position: absolute; left: 0; top: 29px; width: 9px; height: 20px; background: #7e7e7e; box-shadow: 1px 1px 2px #174654; }
.toggle::after { content: ""; position: absolute; left: 3px; top: 7px; border: 3px solid transparent; border-right: 4px solid #080808; border-left: 0; }
.gutter { width: 5px; background: #787878; border-right: 1px solid #2a2a2a; padding-top: 257px; flex: none; }
.gutter i { display: block; height: 35px; background: #636363; }
.panel { flex: 1; background: #191919; overflow: hidden; padding-left: 6px; display: flex; flex-direction: column; align-items: flex-start; color: #8b8b8b; border-bottom: 1px solid #0c0c0c; }
.desc { margin: -5px 0 0; font-size: 11.75px; line-height: 16.6px; white-space: nowrap; flex: none; }
.desc span { letter-spacing: -.08px; }
.import { margin-top: 38.2px; width: 82px; height: 21px; flex: none; border-radius: 3px; background: #7d7d7d; color: #202020; text-align: right; padding-right: 8px; line-height: 21px; font-size: 9.7px; }
.panel label { font-weight: bold; font-size: 9.93px; line-height: 14px; height: 25.2px; padding-top: 7.5px; flex: none; white-space: nowrap; }
.panel .import + label { height: 21px; padding-top: 4px; }
.panel .tall { height: 39.4px; padding-top: 7.8px; }
.field { display: flex; width: 317px; height: 21px; flex: none; background: #7f7f7f; border: 1px solid #6e6e6e; border-radius: 3px; font-size: 8.6px; line-height: 20px; color: #303030; }
.field span { width: 31px; border-right: 1px solid #6a6a6a; display: flex; align-items: center; gap: 1px; padding-left: 7px; color: #151515; flex: none; }
.field span svg { width: 8px; height: 8px; }
.field div { padding: 0 7px 0 7px; flex: 1; min-width: 0; white-space: nowrap; }
.field em { display: block; font-style: normal; overflow: hidden; }
.select { width: 143px; height: 24.5px; flex: none; border: 1px solid #707070; border-radius: 3px; background: linear-gradient(#6f6f6f, #7c7c7c); color: #292929; font-size: 9.8px; line-height: 24px; padding: 0 4px 0 6px; display: flex; align-items: center; }
.select svg { width: 5px; height: 9px; margin-left: auto; fill: #222; }
.panel .s { height: 24.7px; padding-top: 7px; }
.panel .osm { height: 27.9px; }
.osm small { font-size: 8.8px; color: #707070; margin-left: 2px; }
.osm svg { vertical-align: -1px; }
.add { margin-top: 3px; flex: none; }
.modal { position: absolute; left: 300px; top: 22px; width: 426px; height: 143px; background: #fff; border: 1px solid #666; border-radius: 4px; box-shadow: 0 3px 10px rgba(0,0,0,.55); }
.modal-head { height: 61px; border-bottom: 1px solid #e5e5e5; display: flex; justify-content: space-between; padding: 14px 11px 0 10px; }
.modal h1 { margin: 10px 0 0; font-size: 17.8px; line-height: 20px; font-weight: 400; color: #333; -webkit-text-stroke: .35px; }
.modal-body { padding: 11px 10px; }
.ok { color: #13812b; }
.progress { height: 2px; margin-top: 11px; background: #eee; }
.progress i { display: block; width: 3px; height: 2px; background: #0d7cf2; }
.actions { display: flex; gap: 22px; margin: 14px 0 0 9px; color: #1a70b5; }
```
